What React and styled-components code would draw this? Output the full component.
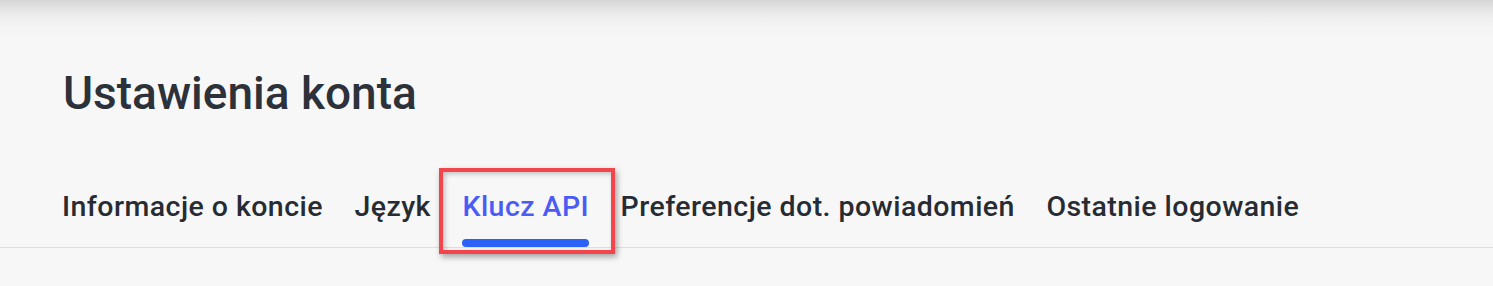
import React from "react";
import styled, { createGlobalStyle } from "styled-components";

const GlobalStyle = createGlobalStyle`
  html, body { margin: 0; padding: 0; }
  body {
    font-family: Roboto, "Noto Sans", "Liberation Sans", sans-serif;
    background: #f7f7f7;
  }
`;

const Page = styled.div`
  height: 286px;
  overflow: hidden;
  background: linear-gradient(
    to bottom,
    #d4d4d4 0px,
    #e3e3e3 8px,
    #eeeeee 17px,
    #f4f4f4 27px,
    #f7f7f7 40px
  );
`;

const Title = styled.h1`
  margin: 0;
  padding: 70px 0 0 63px;
  font-size: 46px;
  line-height: 46px;
  font-weight: 500;
  color: #2c313a;
`;

const TabList = styled.nav`
  margin-top: 77px;
  padding-left: 62px;
  display: flex;
  gap: 31.5px;
  border-bottom: 1px solid #dcdfe4;
`;

const Tab = styled.div`
  position: relative;
  display: flex;
  flex-direction: column;
  gap: 18px;
  font-size: 28.5px;
  line-height: 28px;
  font-weight: 500;
  letter-spacing: 0.45px;
  white-space: nowrap;
  color: ${(p) => (p.$active ? "#4b5cf5" : "#272b33")};
  cursor: pointer;
`;

const Indicator = styled.span`
  display: block;
  height: 8px;
  border-radius: 4px;
  background: ${(p) => (p.$active ? "#2c62f6" : "transparent")};
`;

const Highlight = styled.span`
  position: absolute;
  left: -23px;
  right: -26px;
  top: -25px;
  bottom: -7px;
  border: 4px solid #f2464c;
  box-shadow: 2px 3px 6px rgba(0, 0, 0, 0.35),
    inset 2px 2px 5px rgba(0, 0, 0, 0.22);
  pointer-events: none;
`;

const tabs = [
  "Informacje o koncie",
  "Język",
  "Klucz API",
  "Preferencje dot. powiadomień",
  "Ostatnie logowanie",
];

export default function App() {
  const active = "Klucz API";
  return (
    <>
      <GlobalStyle />
      <Page>
        <Title>Ustawienia konta</Title>
        <TabList>
          {tabs.map((t) => (
            <Tab key={t} $active={t === active}>
              {t}
              <Indicator $active={t === active} />
              {t === active && <Highlight />}
            </Tab>
          ))}
        </TabList>
      </Page>
    </>
  );
}
